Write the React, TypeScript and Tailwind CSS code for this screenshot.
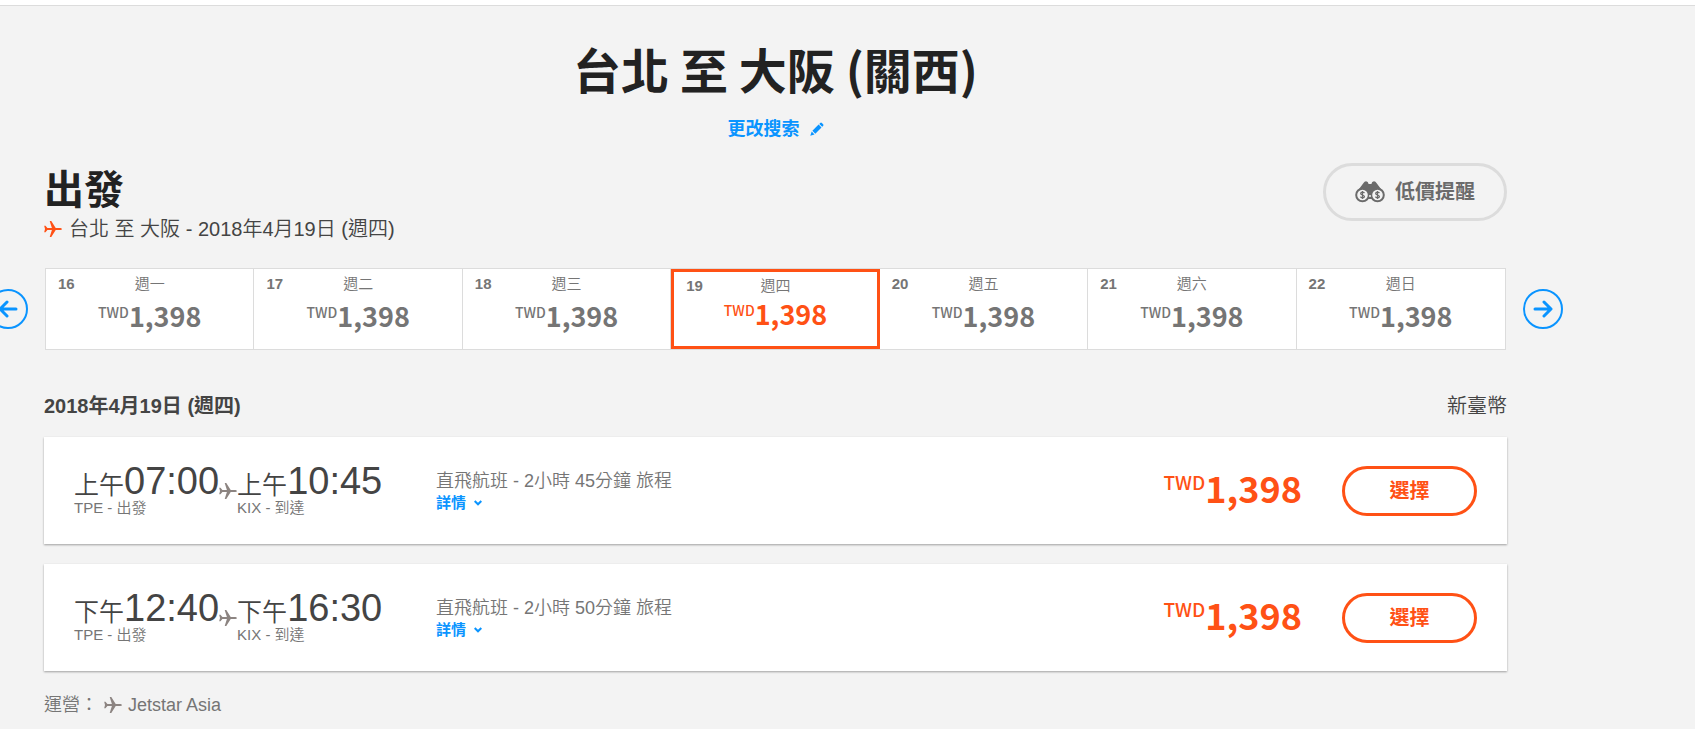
import React, { useState } from 'react';
import clsx from 'clsx';

const days = [
  { date: 16, weekday: '週一', price: '1,398' },
  { date: 17, weekday: '週二', price: '1,398' },
  { date: 18, weekday: '週三', price: '1,398' },
  { date: 19, weekday: '週四', price: '1,398' },
  { date: 20, weekday: '週五', price: '1,398' },
  { date: 21, weekday: '週六', price: '1,398' },
  { date: 22, weekday: '週日', price: '1,398' },
];

const flights = [
  {
    id: 1,
    departure: { period: '上午', time: '07:00', label: 'TPE - 出發' },
    arrival: { period: '上午', time: '10:45', label: 'KIX - 到達' },
    duration: '直飛航班 - 2小時 45分鐘 旅程',
    price: '1,398',
  },
  {
    id: 2,
    departure: { period: '下午', time: '12:40', label: 'TPE - 出發' },
    arrival: { period: '下午', time: '16:30', label: 'KIX - 到達' },
    duration: '直飛航班 - 2小時 50分鐘 旅程',
    price: '1,398',
  },
];

const PlaneIcon: React.FC<{ className?: string }> = ({ className }) => (
  <svg viewBox="0 0 18 16" fill="currentColor" className={className} aria-hidden="true">
    <path d="M18 8c0 .6-1.200 1.100-2.600 1.100h-3.700L7.300 16H5.700l2.200-6.900-4.500-.2L1.500 11.300H.2L1 8 .2 4.700h1.300l1.900 2.400 4.500-.2L5.700 0h1.600l4.400 6.900h3.700C16.800 6.900 18 7.400 18 8z" />
  </svg>
);

const PencilIcon = () => (
  <svg viewBox="0 0 14 14" fill="currentColor" className="size-3.5" aria-hidden="true">
    <path d="M10.200 1a1.200 1.200 0 0 1 1.700 0l1.200 1.200a1.200 1.200 0 0 1 0 1.700l-.9.900-2.900-2.900zM8.600 2.600l2.900 2.900-6.200 6.200-2.900-2.900zM1.700 9.600l2.800 2.800L.3 13.800z" />
  </svg>
);

const BinocularsIcon = () => (
  <svg viewBox="0 0 30 22" className="h-[22px] w-[30px]" aria-hidden="true">
    <path
      d="M8.500 2Q9.500.3 11 .3q2.200 0 2.600 2.700h2.800Q16.800.3 19 .3q1.500 0 2.500 1.700L29 12l-9 6H10L1 12z"
      fill="#6b6b6b"
    />
    <circle cx="7.500" cy="14" r="6.300" fill="#f3f3f3" stroke="#6b6b6b" strokeWidth="2" />
    <circle cx="22.500" cy="14" r="6.300" fill="#f3f3f3" stroke="#6b6b6b" strokeWidth="2" />
    <circle cx="15" cy="15" r="1" fill="#f3f3f3" />
    <g fill="none" stroke="#6b6b6b" strokeWidth="1.300">
      <path d="M9.400 12.200C9 10.700 5.700 10.700 5.700 12.500c0 1.800 3.700 1.200 3.700 3 0 1.800-3.500 1.800-3.900.2M7.500 10v8" />
      <path d="M24.400 12.200c-.4-1.500-3.700-1.500-3.700.3 0 1.800 3.700 1.200 3.700 3 0 1.800-3.500 1.800-3.900.2M22.500 10v8" />
    </g>
  </svg>
);

const ArrowButton: React.FC<{ direction: 'prev' | 'next' }> = ({ direction }) => (
  <button
    type="button"
    aria-label={direction === 'prev' ? '上一週' : '下一週'}
    className="flex size-10 shrink-0 items-center justify-center rounded-full border-2 border-[#0a94ff] text-[#0a94ff]"
  >
    <svg
      viewBox="0 0 20 18"
      fill="none"
      stroke="currentColor"
      strokeWidth="3"
      strokeLinecap="round"
      strokeLinejoin="round"
      className={clsx('h-[18px] w-5', direction === 'prev' && 'rotate-180')}
    >
      <path d="M2 9h15M11 2l7 7-7 7" />
    </svg>
  </button>
);

const Stop: React.FC<{ period: string; time: string; label: string }> = ({ period, time, label }) => (
  <div className="pt-1 text-[#444]">
    <div className="text-[38px] leading-[26px]">
      <span className="text-[25px]">{period}</span>
      {time}
    </div>
    <div className="text-[15px] leading-5 text-[#757575]">{label}</div>
  </div>
);

export default function App() {
  const [selected, setSelected] = useState(19);

  return (
    <div className="min-h-screen overflow-hidden bg-[#f3f3f3] font-['Liberation_Sans','Noto_Sans_CJK_TC',sans-serif] font-[350] text-[#444]">
      <div className="h-1.5 border-b border-[#dcdcdc] bg-white" />

      <header className="flex flex-col items-center pt-7 pr-[188px] pl-11">
        <h1 className="font-['Noto_Sans_CJK_TC',sans-serif] text-5xl leading-[68px] font-bold text-[#222]">台北 至 大阪 (關西)</h1>
        <a href="#search" className="mt-[13px] flex items-center gap-2.5 text-lg leading-7 font-bold text-[#0a94ff]">
          更改搜索
          <PencilIcon />
        </a>
      </header>

      <section className="flex items-start justify-between pt-5 pr-[188px] pl-11">
        <div>
          <h2 className="font-['Noto_Sans_CJK_TC',sans-serif] text-[40px] leading-[48px] font-bold text-[#222]">出發</h2>
          <p className="mt-1 flex items-center gap-[7px] text-xl leading-7">
            <PlaneIcon className="h-4 w-[18px] text-[#ff5115]" />
            台北 至 大阪 - 2018年4月19日 (週四)
          </p>
        </div>
        <button type="button" className="flex h-[58px] items-center gap-2.5 rounded-full border-3 border-[#dcdcdc] px-[29px] text-xl font-bold text-[#6b6b6b]">
          <BinocularsIcon />
          低價提醒
        </button>
      </section>

      <section className="mt-[25px] -ml-3 flex items-center gap-4 pr-[132px]">
        <ArrowButton direction="prev" />
        <div className="mx-px grid flex-1 grid-cols-7 border border-[#dcdcdc] bg-white">
          {days.map((day) => (
            <button
              key={day.date}
              type="button"
              onClick={() => setSelected(day.date)}
              className={clsx(
                'flex h-20 flex-col text-[#757575]',
                day.date === selected ? 'border-3 border-[#ff5115]' : 'border-r border-[#dcdcdc] pt-px last:border-r-0'
              )}
            >
              <span className="grid w-full grid-cols-[1fr_auto_1fr] px-3 text-[15px] leading-7">
                <b className="text-left font-bold">{day.date}</b>
                <span>{day.weekday}</span>
              </span>
              <span
                className={clsx(
                  "flex w-full items-start justify-center font-['Noto_Sans_CJK_TC',sans-serif] text-[27px] font-bold",
                  day.date === selected ? 'leading-7 text-[#ff5115]' : 'leading-9'
                )}
              >
                <span className={clsx('text-[14px] font-medium', day.date === selected ? 'leading-5' : 'leading-7')}>TWD</span>
                {day.price}
              </span>
            </button>
          ))}
        </div>
        <ArrowButton direction="next" />
      </section>

      <main className="pt-10 pr-[188px] pl-11">
        <div className="flex items-center justify-between text-xl leading-8">
          <h3 className="font-bold">2018年4月19日 (週四)</h3>
          <span>新臺幣</span>
        </div>

        <div className="mt-[15px] flex flex-col gap-5">
          {flights.map((flight) => (
            <article key={flight.id} className="flex h-[107px] items-center bg-white px-[30px] shadow-[0_1px_2px_rgba(0,0,0,0.35)]">
              <div className="flex w-[362px] items-center">
                <Stop {...flight.departure} />
                <PlaneIcon className="h-4 w-[18px] text-[#8c8481]" />
                <Stop {...flight.arrival} />
              </div>
              <div className="flex-1 text-[#757575]">
                <p className="text-lg leading-6">{flight.duration}</p>
                <a href="#details" className="flex items-center gap-2 text-[15px] leading-5 font-bold text-[#0a94ff]">
                  詳情
                  <svg viewBox="0 0 8 6" fill="none" stroke="currentColor" strokeWidth="2" className="h-1.5 w-2" aria-hidden="true">
                    <path d="M.7 1 4 4.300 7.300 1" />
                  </svg>
                </a>
              </div>
              <div className="flex items-start pb-2 font-['Noto_Sans_CJK_TC',sans-serif] text-4xl leading-[52px] font-bold text-[#ff5115]">
                <span className="text-[19px] leading-[42px] font-medium">TWD</span>
                {flight.price}
              </div>
              <button type="button" className="ml-10 h-[50px] w-[135px] rounded-full border-3 border-[#ff5115] text-xl font-bold text-[#ff5115]">
                選擇
              </button>
            </article>
          ))}
        </div>

        <footer className="mt-[22px] flex items-center gap-1.5 text-lg leading-6 text-[#757575]">
          運營：
          <PlaneIcon className="h-4 w-[18px] text-[#8c8481]" />
          Jetstar Asia
        </footer>
      </main>
    </div>
  );
}
